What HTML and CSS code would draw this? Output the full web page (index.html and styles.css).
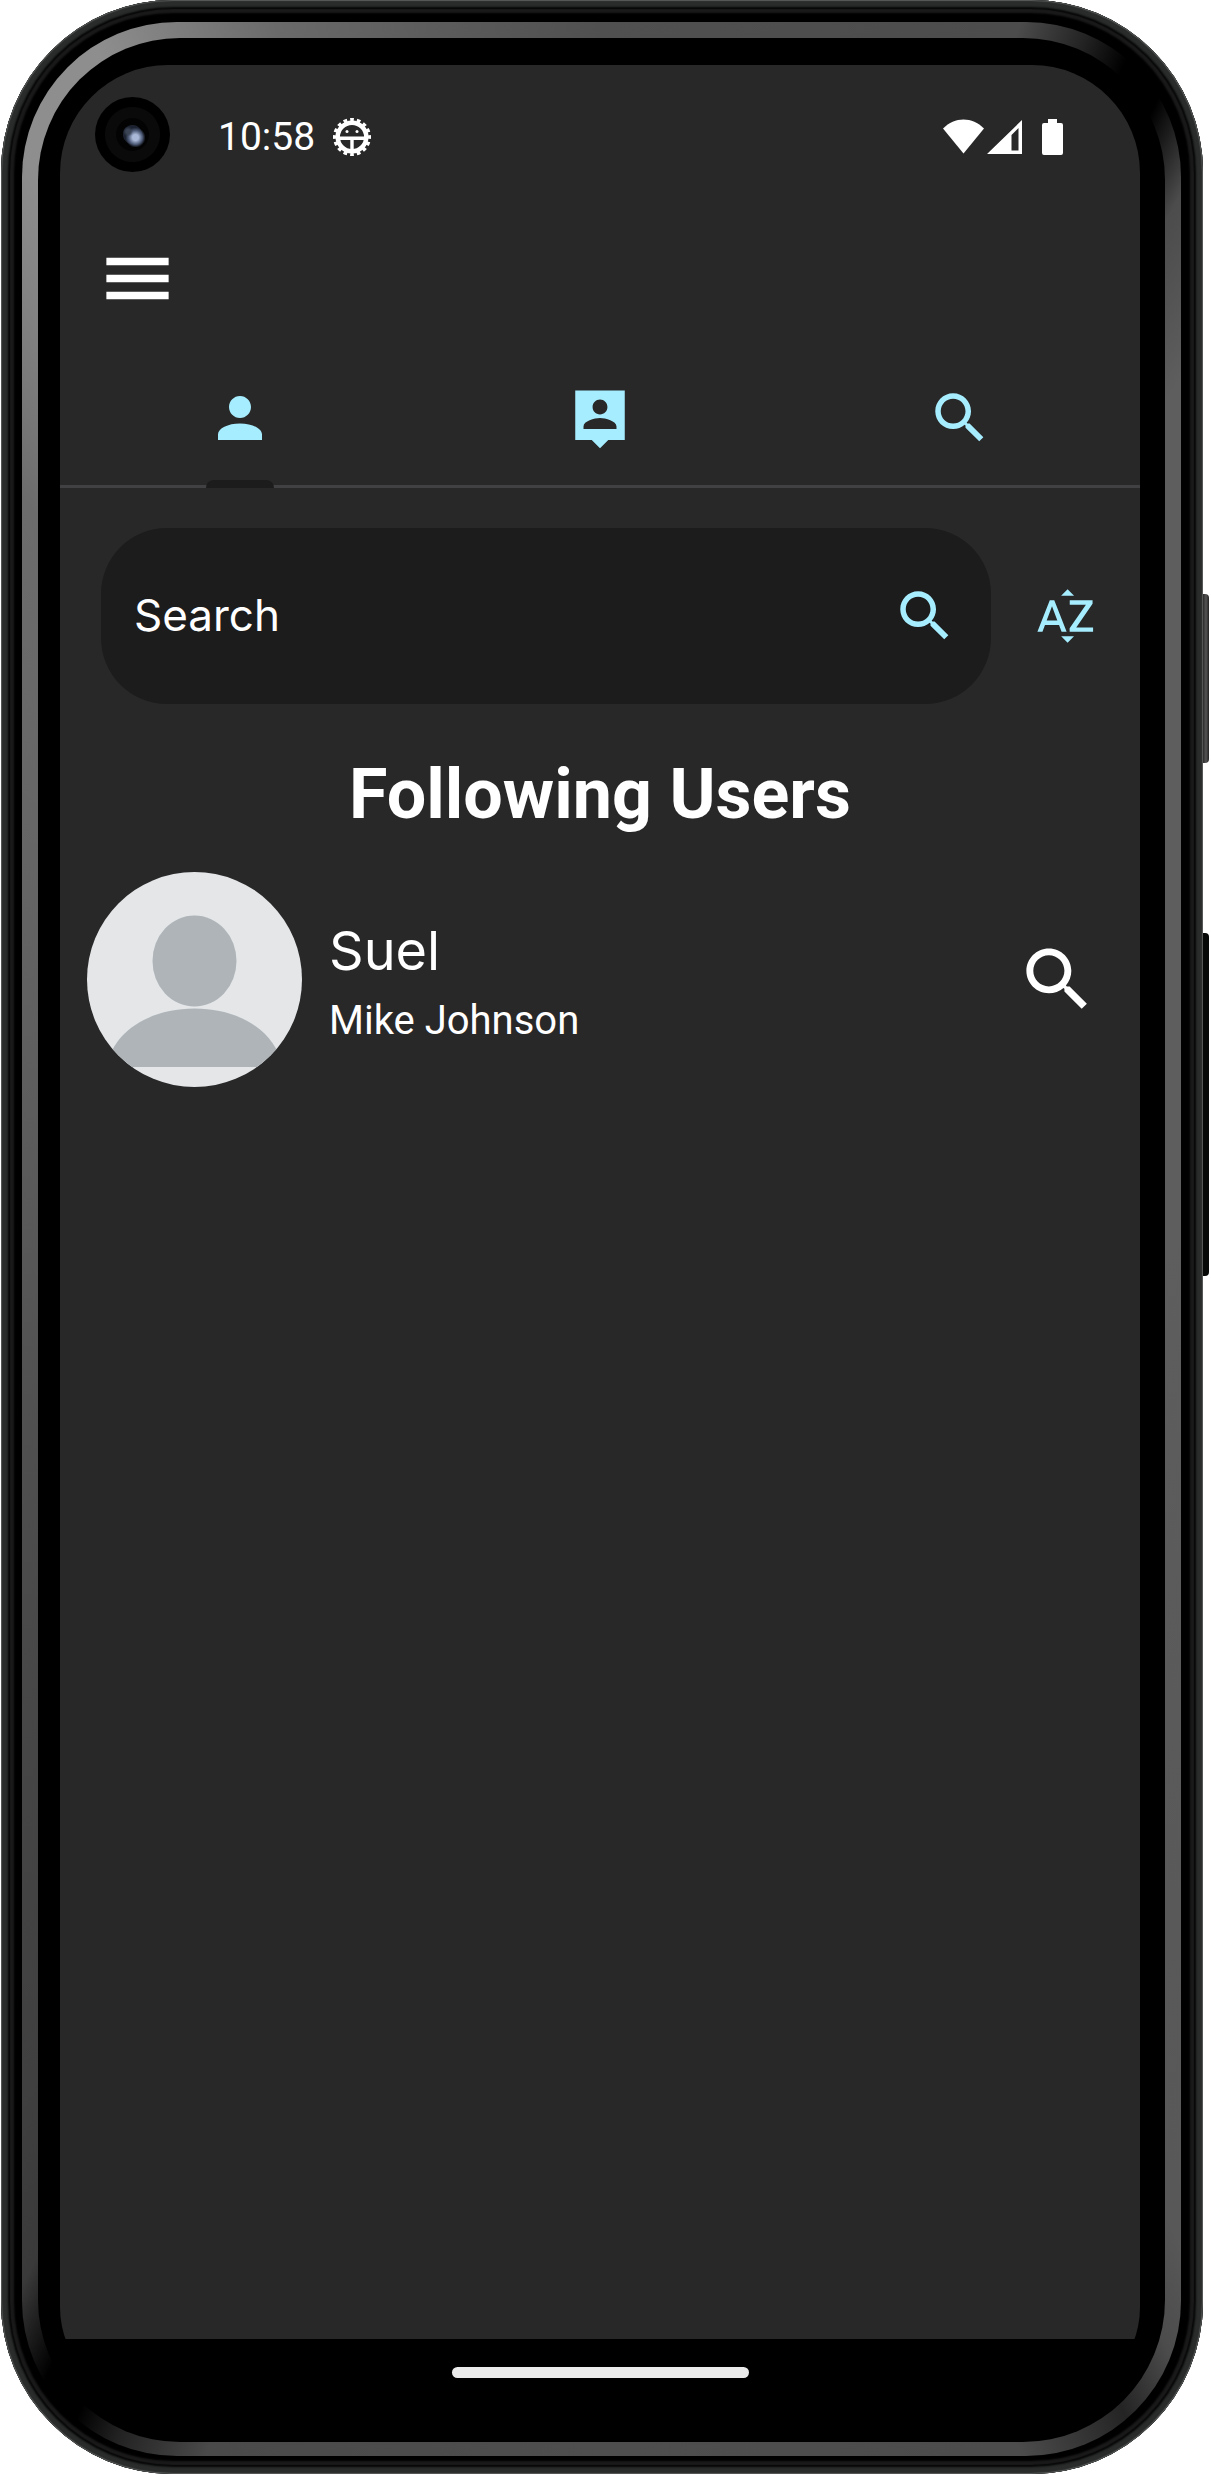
FILE: index.html
```html
<!DOCTYPE html>
<html lang="en">
<head>
<meta charset="utf-8">
<meta name="viewport" content="width=device-width, initial-scale=1">
<title>Following Users</title>
<link rel="stylesheet" href="styles.css">
</head>
<body>
<svg class="symbols" aria-hidden="true">
  <symbol id="search" viewBox="0 0 24 24"><path d="M15.5 14h-.79l-.28-.27C15.41 12.59 16 11.11 16 9.5 16 5.91 13.09 3 9.5 3S3 5.91 3 9.5 5.91 16 9.5 16c1.61 0 3.09-.59 4.23-1.57l.27.28v.79l5 4.99L20.49 19l-4.99-5zm-6 0C7.01 14 5 11.99 5 9.5S7.01 5 9.5 5 14 7.01 14 9.5 11.99 14 9.5 14z"/></symbol>
</svg>
<div class="phone">
  <span class="side-key power"></span>
  <span class="side-key volume"></span>
  <div class="rim">
    <div class="bezel">
      <div class="screen">
        <span class="camera"></span>
        <div class="status">
          <span class="clock">10:58</span>
          <svg class="debug" viewBox="0 0 38 38" fill="none" stroke="#fff">
            <circle cx="19" cy="19" r="14.300" stroke-width="4.500"/>
            <circle cx="19" cy="19" r="17" stroke-width="4" pathLength="32" stroke-dasharray="1.100 .900" stroke-dashoffset="0.550"/>
            <path d="M5 20.200h28M19 20v15" stroke-width="3.400"/>
            <circle cx="14" cy="13.500" r="1.500" fill="#fff" stroke="none"/>
            <circle cx="24" cy="13.500" r="1.500" fill="#fff" stroke="none"/>
          </svg>
          <svg class="signals" viewBox="0 0 120 36" fill="#fff">
            <path d="M20.500 34.500 0 9.500C6 3.500 13 .500 20.500 .500S35 3.500 41 9.500z"/>
            <path fill-rule="evenodd" d="M44 35 79 1v34zM68.500 16v15.500h7V9z"/>
            <path d="M105 0h9v4h4q2 0 2 2v28q0 2-2 2h-17q-2 0-2-2V6q0-2 2-2h4z"/>
          </svg>
        </div>
        <header class="header">
          <button class="icon-button menu" aria-label="Menu">
            <svg viewBox="0 0 24 24"><path d="M3 18h18v-2.200H3V18zm0-4.900h18v-2.200H3v2.200zM3 6v2.200h18V6H3z"/></svg>
          </button>
        </header>
        <nav class="tabs">
          <button class="tab selected" aria-label="Following">
            <svg class="icon" viewBox="0 0 24 24"><path d="M12 12c2.210 0 4-1.790 4-4s-1.790-4-4-4-4 1.790-4 4 1.790 4 4 4zm0 2c-4.420 0-8 1.790-8 4v2h16v-2c0-2.210-3.580-4-8-4z"/></svg>
          </button>
          <button class="tab" aria-label="Followers">
            <svg class="icon" viewBox="0 0 24 24"><path d="M21 2H3v18h6l3 3 3-3h6V2zm-9 3.300c1.490 0 2.700 1.210 2.700 2.700s-1.210 2.700-2.700 2.700S9.300 9.490 9.300 8s1.210-2.700 2.700-2.700zM18 16H6v-.900c0-2 4-3.100 6-3.100s6 1.100 6 3.100v.900z"/></svg>
          </button>
          <button class="tab" aria-label="Find users">
            <svg class="icon"><use href="#search"/></svg>
          </button>
        </nav>
        <main class="content">
          <form class="search-row">
            <label class="search-box">
              <input type="text" placeholder="Search" aria-label="Search">
              <svg class="icon"><use href="#search"/></svg>
            </label>
            <button type="button" class="icon-button" aria-label="Sort alphabetically">
              <svg class="icon" viewBox="0 0 24 24"><path d="M14.940 4.660h-4.720l2.360-2.360zm-4.690 14.710h4.660l-2.330 2.330zM6.100 6.270 1.600 17.730h1.840l.920-2.450h5.110l.920 2.450h1.840L7.740 6.270H6.100zm-1.130 7.370 1.940-5.180 1.940 5.180H4.970zm10.760 2.500h6.120v1.590h-8.530v-1.290l5.920-8.560h-5.880v-1.600h8.300v1.260l-5.930 8.600z"/></svg>
            </button>
          </form>
          <h1>Following Users</h1>
          <ul class="users">
            <li class="user">
              <svg class="avatar" viewBox="0 0 215 215">
                <clipPath id="face"><circle cx="107.500" cy="107.500" r="107.500"/></clipPath>
                <g clip-path="url(#face)">
                  <path fill="#e4e6e8" d="M0 0h215v215H0z"/>
                  <ellipse cx="107.500" cy="89" rx="42" ry="45.500" fill="#aeb4b8"/>
                  <path fill="#aeb4b8" d="M20 195v-1C26 160 62 136.500 107.500 136.500S189 160 195 194v1z"/>
                </g>
              </svg>
              <div class="names">
                <span class="name">Suel</span>
                <span class="full-name">Mike Johnson</span>
              </div>
              <button class="icon-button view" aria-label="View Suel">
                <svg><use href="#search"/></svg>
              </button>
            </li>
          </ul>
        </main>
        <div class="home-bar"><span class="home-pill"></span></div>
      </div>
    </div>
  </div>
</div>
</body>
</html>
```
FILE: styles.css
```css
* { box-sizing: border-box; }

body {
  margin: 0;
  background: #fff;
  color: #fff;
  font-family: Roboto, "Liberation Sans", sans-serif;
}

button, input {
  margin: 0;
  padding: 0;
  border: 0;
  background: none;
  color: inherit;
  font: inherit;
}

svg { display: block; }
.symbols { position: absolute; width: 0; height: 0; }

/* Device body */
.phone {
  position: relative;
  display: flex;
  min-height: 100vh;
  padding: 22px 22px 18px 21px;
  margin: 0 8px 0 1px;
  border-radius: 172px;
  background: #000;
  box-shadow:
    inset 0 0 1px 1px #5a5c5c,
    inset 0 0 2px 7px #2a2c2c,
    inset 0 0 1px 9px #060606,
    inset 0 0 2px 13px #1a1a1a;
}

.side-key {
  position: absolute;
  left: 100%;
  width: 6px;
  border-radius: 0 4px 4px 0;
}
.power { top: 594px; height: 169px; background: linear-gradient(90deg, #2a2a2a, #555 50%, #222); }
.volume { top: 933px; height: 343px; background: #060707; }

.rim {
  display: flex;
  flex: 1;
  padding: 16px 16px 14px;
  border-radius: 155px;
  background: conic-gradient(
    #505050 0deg, #4c4c4c 19deg, #222 22deg, #000 24deg, #000 26deg,
    #4c4c4c 29deg, #5e5e5e 34deg, #5e5e5e 90deg, #585858 150deg,
    #4c4c4c 153deg, #242424 156deg, #4c4c4c 161deg, #4e4e4e 180deg,
    #4a4a4a 198deg, #222 202deg, #000 204deg, #000 206deg, #3a3a3a 209deg,
    #404040 214deg, #585858 270deg, #6c6c6c 322deg, #8e8e8e 332deg,
    #8e8e8e 337deg, #6a6a6a 345deg, #5c5c5c 352deg, #505050 360deg);
}

.bezel {
  display: flex;
  flex: 1;
  padding: 27px 25px 37px 22px;
  border-radius: 142px;
  background: #000;
}

.screen {
  position: relative;
  display: flex;
  flex: 1;
  flex-direction: column;
  min-width: 0;
  overflow: hidden;
  border-radius: 108px 108px 98px 98px;
  background: linear-gradient(#282828, #282828) top / 100% calc(100% - 66px) no-repeat #000;
}

.camera {
  position: absolute;
  top: 32px;
  left: 35px;
  width: 75px;
  height: 75px;
  border-radius: 50%;
  background:
    radial-gradient(circle at 44% 46%, #3a4454 0 2px, transparent 5px),
    radial-gradient(circle at 54% 54%, #a9b8d6 0 3px, #4d5a76 7px, transparent 10px),
    radial-gradient(circle, #1c2230 0 9px, #030303 10px 16px, #0a0a0a 17px 27px, #000 28px);
}

/* Status bar */
.status {
  display: flex;
  align-items: center;
  height: 144px;
  padding: 0 77px 0 158px;
}
.clock { font-size: 39px; line-height: 46px; }
.debug { width: 38px; height: 38px; margin-left: 18px; }
.signals { width: 120px; height: 36px; margin-left: auto; }

.header {
  display: flex;
  align-items: center;
  height: 138px;
  padding: 0 36px;
}
.icon-button { flex: none; color: #a6edff; fill: currentColor; cursor: pointer; }
.menu, .view { color: #fff; }
.menu svg, .view svg { width: 83px; height: 83px; }
.icon { flex: none; width: 66px; height: 66px; fill: #a6edff; }

/* Tabs */
.tabs {
  display: flex;
  height: 141px;
  box-shadow: inset 0 -3px #414143;
}
.tab {
  position: relative;
  display: flex;
  flex: 1;
  align-items: center;
  justify-content: center;
  cursor: pointer;
}
.selected::after {
  content: "";
  position: absolute;
  bottom: 0;
  width: 68px;
  height: 8px;
  border-radius: 8px 8px 0 0;
  background: #1c1c1c;
}

.content { flex: 1; }

.search-row {
  display: flex;
  align-items: center;
  gap: 42px;
  padding: 40px 41px 0;
}
.search-box {
  display: flex;
  flex: 1;
  align-items: center;
  height: 176px;
  min-width: 0;
  padding: 0 33px;
  border-radius: 66px;
  background: #1c1c1c;
}
.search-box input {
  flex: 1;
  min-width: 0;
  height: 60px;
  padding-bottom: 3px;
  outline: 0;
  font-family: Inter, Roboto, sans-serif;
  font-size: 44px;
}
.search-box input::placeholder { color: #fff; opacity: 1; }

h1 {
  margin: 50px 0 38px;
  font-size: 70px;
  font-weight: 700;
  line-height: 80px;
  text-align: center;
}

.users { margin: 0; padding: 0; list-style: none; }
.user {
  display: flex;
  align-items: center;
  padding: 0 41px 0 27px;
}
.avatar { flex: none; width: 215px; height: 215px; }
.names {
  display: flex;
  flex: 1;
  flex-direction: column;
  gap: 8px;
  min-width: 0;
  padding-left: 27px;
}
.name { font-family: Inter, Roboto, sans-serif; font-size: 54px; line-height: 74px; }
.full-name { font-size: 40px; line-height: 50px; }

.home-bar {
  display: flex;
  align-items: center;
  justify-content: center;
  height: 66px;
}
.home-pill { width: 297px; height: 11px; border-radius: 6px; background: #ebebeb; }
```
